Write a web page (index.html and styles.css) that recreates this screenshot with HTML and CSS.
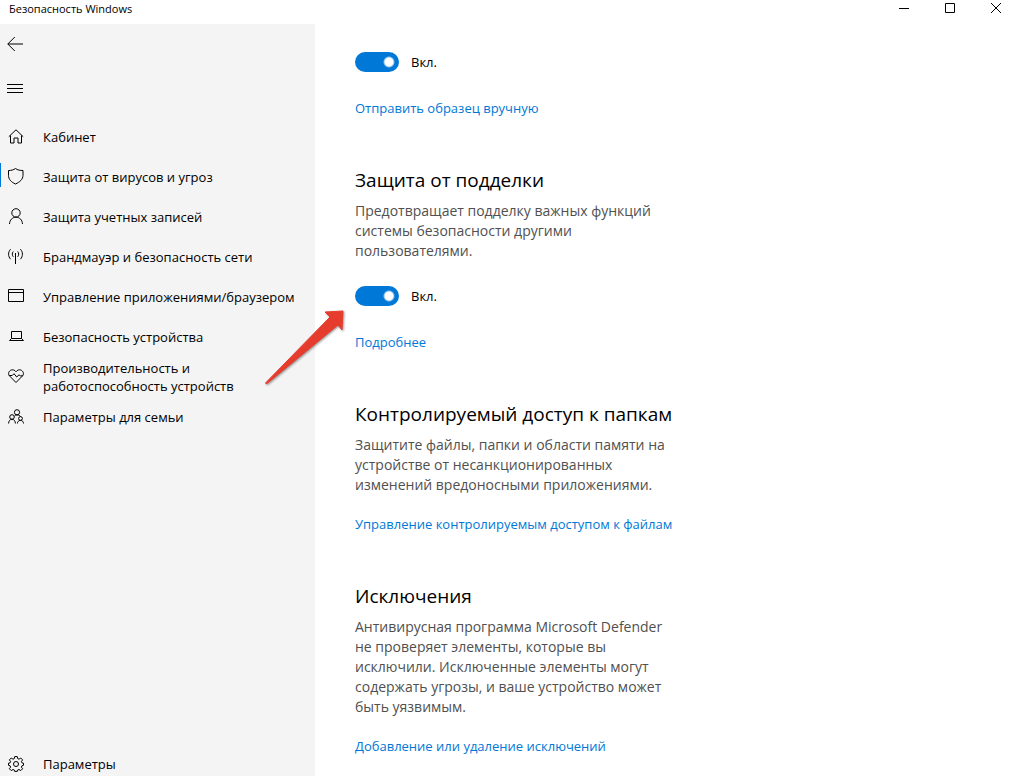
FILE: index.html
```html
<!DOCTYPE html>
<html lang="ru">
<head>
<meta charset="utf-8">
<title>Безопасность Windows</title>
<link rel="stylesheet" href="styles.css">
</head>
<body>
<header class="titlebar">
  <span class="titlebar-text">Безопасность Windows</span>
  <div class="window-buttons">
    <button class="window-button" aria-label="Свернуть"><svg width="12" height="12" viewBox="0 0 12 12"><path d="M1 6.500h10"/></svg></button>
    <button class="window-button" aria-label="Развернуть"><svg width="12" height="12" viewBox="0 0 12 12"><path d="M1.500 1.500h9v9h-9z"/></svg></button>
    <button class="window-button" aria-label="Закрыть"><svg width="12" height="12" viewBox="0 0 12 12"><path d="M1 1l10 10M11 1L1 11"/></svg></button>
  </div>
</header>
<div class="layout">
  <aside class="sidebar">
    <button class="bar-button" aria-label="Назад"><svg width="16" height="16" viewBox="0 0 16 16"><path d="M.8 8H16M7.800 1L.8 8l7 7"/></svg></button>
    <button class="bar-button" aria-label="Меню"><svg width="16" height="16" viewBox="0 0 16 16"><path d="M0 4.500h16M0 8.500h16M0 12.500h16"/></svg></button>
    <nav class="nav">
      <a class="nav-item" href="#"><svg width="16" height="16" viewBox="0 0 16 16"><path d="M.8 7.700L8 .8l7.200 6.900M2.500 6.500v7.500h3.500V9h4v5h3.500V6.500"/></svg><span>Кабинет</span></a>
      <a class="nav-item nav-item-active" href="#"><svg width="16" height="16" viewBox="0 0 16 16"><path d="M7.500-.5C5.500 1 3 1.500.5 1.500v4.800c0 4 2.600 6.700 7 8.700 4.400-2 7.500-4.700 7.500-8.700V1.500C12 1.500 9.500 1 7.500-.5z"/></svg><span>Защита от вирусов и угроз</span></a>
      <a class="nav-item" href="#"><svg width="16" height="16" viewBox="0 0 16 16"><circle cx="8" cy="3.900" r="4.200"/><path d="M1.500 15C1.700 11 4.300 8.200 8 8.200s6.300 2.800 6.500 6.800"/></svg><span>Защита учетных записей</span></a>
      <a class="nav-item" href="#"><svg width="16" height="16" viewBox="0 0 16 16"><path d="M7.500 4v11M5.300 2.500c-1.300 1.300-1.300 4 0 5.300M9.700 2.500c1.300 1.300 1.300 4 0 5.300M2.600.2c-2.700 2.800-2.700 7.200 0 10M12.400.2c2.700 2.800 2.700 7.200 0 10"/></svg><span>Брандмауэр и безопасность сети</span></a>
      <a class="nav-item" href="#"><svg width="16" height="16" viewBox="0 0 16 16"><path d="M.5.500h15v12H.5zM.5 3.500h15"/></svg><span>Управление приложениями/браузером</span></a>
      <a class="nav-item" href="#"><svg width="16" height="16" viewBox="0 0 16 16"><path d="M3.500 2.500h10v7h-10zM3.500 9.500l-2 2h14l-2-2"/></svg><span>Безопасность устройства</span></a>
      <a class="nav-item" href="#"><svg width="16" height="16" viewBox="0 0 16 16"><path d="M8 2.800C6.700.9 4.800.5 3.300 1 .8 1.800-.2 4.800 1.300 6.700L8 13.500l6.700-6.800c1.500-1.900.5-4.900-2-5.700-1.500-.5-3.400-.1-4.700 1.800zM1.200 6.500h3L6 4.700 8.700 8l2.300-2.200 1.400 1h2.400"/></svg><span>Производительность и работоспособность устройств</span></a>
      <a class="nav-item" href="#"><svg width="16" height="16" viewBox="0 0 16 16"><circle cx="9" cy="3.300" r="2.600"/><circle cx="4" cy="8" r="2.300"/><circle cx="12.500" cy="9.500" r="1.900"/><path d="M.6 14.500c0-2.500 1.400-4.200 3.400-4.200s3.400 1.700 3.400 4.200M9.400 14.500c0-1.800 1.300-3.100 3.100-3.100s3 1.300 3 3.100M6.500 7C7 6.300 8 5.900 9 5.900c1.800 0 3 .7 3.500 1.700"/></svg><span>Параметры для семьи</span></a>
    </nav>
    <a class="nav-settings" href="#"><svg width="16" height="16" viewBox="0 0 16 16"><path d="M6.700.6h2.600l.4 2 1.300.6 1.800-1.200 1.800 1.900-1.200 1.800.5 1.100 1.600.4v2.100l-1.600.5-.5 1.300 1.200 1.700-1.800 1.800-1.800-1.100-1.300.5-.4 1.400H6.700l-.4-1.400-1.300-.5-1.800 1.100-1.800-1.800 1.200-1.700-.5-1.300-1.600-.5V7.200l1.600-.4.5-1.100-1.200-1.800L3.200 2 5 3.200l1.300-.6z"/><circle cx="8" cy="8" r="2.500"/></svg><span>Параметры</span></a>
  </aside>
  <main class="content">
    <section class="section">
      <label class="switch-row"><input class="switch" type="checkbox" role="switch" checked><span>Вкл.</span></label>
      <a class="link link-after-switch" href="#">Отправить образец вручную</a>
    </section>
    <section class="section">
      <h2 class="heading">Защита от подделки</h2>
      <p class="description">Предотвращает подделку важных функций системы безопасности другими пользователями.</p>
      <label class="switch-row switch-row-spaced"><input class="switch" type="checkbox" role="switch" checked><span>Вкл.</span></label>
      <a class="link link-after-switch" href="#">Подробнее</a>
    </section>
    <section class="section">
      <h2 class="heading">Контролируемый доступ к папкам</h2>
      <p class="description">Защитите файлы, папки и области памяти на устройстве от несанкционированных изменений вредоносными приложениями.</p>
      <a class="link" href="#">Управление контролируемым доступом к файлам</a>
    </section>
    <section class="section">
      <h2 class="heading">Исключения</h2>
      <p class="description">Антивирусная программа Microsoft Defender не проверяет элементы, которые вы исключили. Исключенные элементы могут содержать угрозы, и ваше устройство может быть уязвимым.</p>
      <a class="link" href="#">Добавление или удаление исключений</a>
    </section>
  </main>
</div>
<svg class="pointer" width="90" height="84" viewBox="0 0 90 84" aria-hidden="true"><path d="M79 7L61 8l5 5L1.500 79l1 1L74 21l4 5z"/></svg>
</body>
</html>
```
FILE: styles.css
```css
* {
  box-sizing: border-box;
}

body {
  margin: 0;
  min-height: 100vh;
  display: flex;
  flex-direction: column;
  position: relative;
  background: #fff;
  color: #000;
  font: 13px/18px "Open Sans", "Noto Sans", sans-serif;
}

a {
  color: inherit;
  text-decoration: none;
}

button {
  border: 0;
  padding: 0;
  background: none;
}

svg {
  display: block;
  flex: none;
  fill: none;
  stroke: #000;
}

.titlebar {
  height: 24px;
  display: flex;
  justify-content: space-between;
  align-items: flex-start;
}

.titlebar-text {
  padding-left: 9px;
  font-size: 11px;
}

.window-buttons {
  display: flex;
}

.window-button {
  width: 46px;
  height: 16px;
  display: flex;
  align-items: center;
  justify-content: center;
}

.window-button:last-child {
  width: 28px;
  margin-left: 9px;
}

.layout {
  flex: 1;
  display: flex;
}

.sidebar {
  flex: none;
  width: 315px;
  display: flex;
  flex-direction: column;
  background: #f4f4f4;
}

.bar-button {
  width: 40px;
  height: 40px;
  margin-bottom: 4px;
  padding-left: 7px;
  display: flex;
  align-items: center;
}

.nav {
  flex: 1;
  margin-top: 5px;
}

.nav svg {
  overflow: visible;
}

.nav-item {
  height: 40px;
  padding: 0 16px 0 8px;
  display: flex;
  align-items: center;
  gap: 19px;
}

.nav-item-active {
  background: linear-gradient(#0078d7, #0078d7) 0 6px / 1px 24px no-repeat;
}

.nav-settings {
  height: 24px;
  padding-left: 8px;
  display: flex;
  align-items: center;
  gap: 19px;
}

.content {
  flex: 1;
  padding: 28px 16px 20px 40px;
  display: flex;
  flex-direction: column;
  gap: 48px;
}

.section {
  display: flex;
  flex-direction: column;
  align-items: flex-start;
}

.heading {
  margin: 0 0 7px;
  font-size: 19px;
  line-height: 28px;
  font-weight: 400;
}

.description {
  margin: 0;
  max-width: 324px;
  font-size: 14px;
  line-height: 20px;
  color: #505050;
}

.switch-row {
  height: 20px;
  display: flex;
  align-items: center;
  gap: 12px;
}

.switch-row-spaced {
  margin-top: 25px;
}

.switch {
  appearance: none;
  width: 44px;
  height: 20px;
  margin: 0;
  border-radius: 10px;
  background: radial-gradient(circle at 34px 10px, #fff 4px, #0078d7 6px);
}

.link {
  margin-top: 19px;
  line-height: 20px;
  color: #0078d7;
}

.link-after-switch {
  margin-top: 26px;
}

.pointer {
  position: absolute;
  left: 264px;
  top: 304px;
  pointer-events: none;
  fill: #e63c2e;
  stroke: #e63c2e;
  stroke-linejoin: round;
  filter: drop-shadow(1px 1px 1px #0006);
}
```
